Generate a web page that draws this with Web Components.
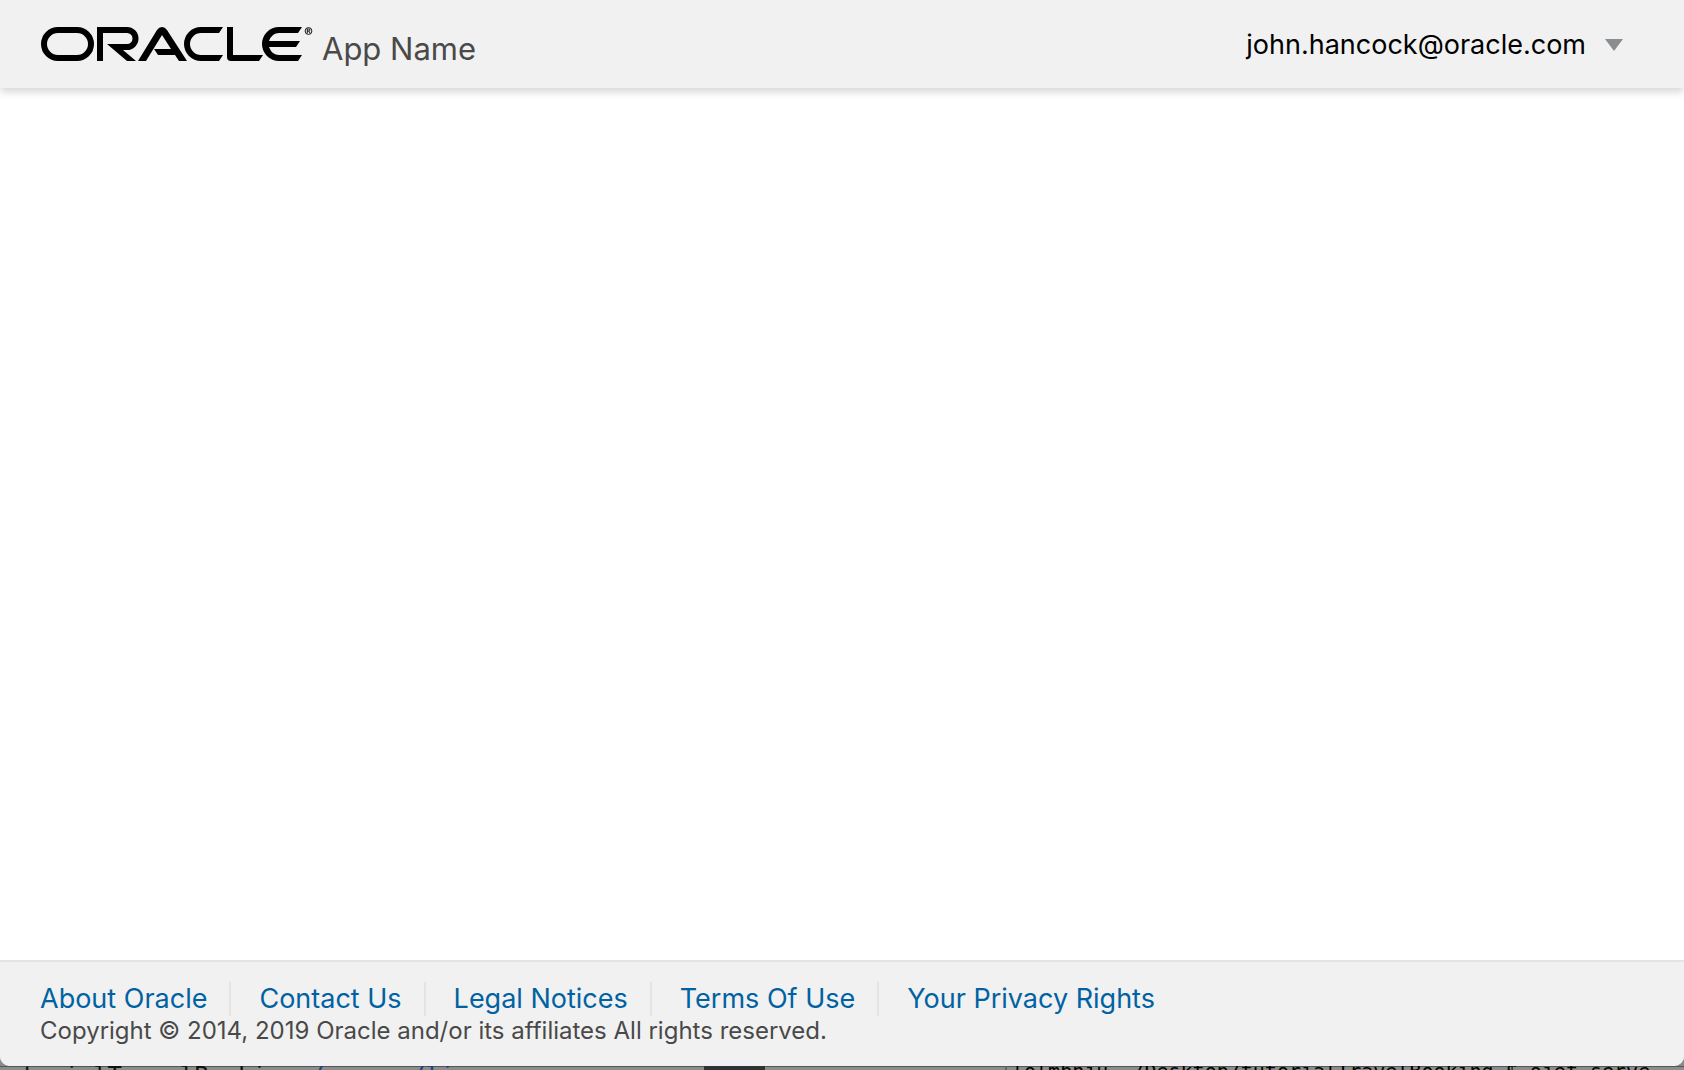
<!DOCTYPE html>
<html lang="en">
<head>
<meta charset="utf-8">
<title>App Name</title>
<style>
html,body{margin:0;height:100%;overflow:hidden}
body{font-family:Inter,Roboto,"Liberation Sans",sans-serif;background:#8c8c8c}
</style>
</head>
<body>
<app-shell></app-shell>
<script>
const define=(name,html)=>customElements.define(name,class extends HTMLElement{
  constructor(){super();this.attachShadow({mode:"open"}).innerHTML=html;}
});

define("oracle-logo",`<style>:host{display:block}svg{display:block;width:273px;height:36px}</style>
<svg viewBox="0 0 273 36" role="img" aria-label="Oracle">
<g fill="none" stroke="#000" stroke-width="6">
<path d="M18 4H37A14 14 0 0 1 37 32H18A14 14 0 0 1 18 4Z"/>
<path d="M60 35V4H87A8.500 8.500 0 0 1 87 21H82"/>
</g>
<path d="M67 18H88V24H83L96 35H87Z"/>
<path d="M98 35L117 4Q119 1 122 1T127 4L147 35H139L135 29H118L114 23H131L122 9L106 35Z"/>
<path d="M183 1L179 7H161A11 11 0 0 0 161 29H183L179 35H161A17 17 0 0 1 161 1Z"/>
<path d="M187 1H193V29H223L219 35H191Q187 35 187 31Z"/>
<path d="M262 1L258 7H239Q232 7 229 15H260L256 21H229Q232 29 239 29H262L258 35H239A17 17 0 0 1 239 1Z"/>
<g fill="none" stroke="#000"><circle cx="268.500" cy="5" r="3.400" stroke-width=".9"/><path stroke-width=".9" d="M267.300 7.300V3H268.700Q270 3 270 4T268.700 5H267.300M268.700 5L270.200 7.300"/></g>
</svg>`);

define("user-menu",`<style>:host{display:block}
button{display:flex;align-items:center;gap:19px;padding:0;border:0;background:none;color:#000;font:inherit;font-size:27px;line-height:36px}
svg{display:block}</style>
<button type="button" aria-haspopup="menu"><slot></slot><svg width="18" height="12" aria-hidden="true"><path d="M0 0H18L9 12Z" fill="#8a8d8f"/></svg></button>`);

define("app-header",`<style>:host{display:flex;align-items:center;justify-content:space-between;height:88px;padding:2px 61px 0 40px;box-sizing:border-box;background:#f1f1f1;box-shadow:0 4px 8px 0 rgba(0,0,0,.16);position:relative}
.brand{display:flex;align-items:flex-start;gap:9px;padding-top:2px}
h1{margin:5px 0 0;font-size:31px;line-height:36px;font-weight:400;color:#494949}
</style><div class="brand"><oracle-logo></oracle-logo><h1>App Name</h1></div><user-menu>john.hancock@oracle.com</user-menu>`);

define("footer-link",`<style>:host{display:block;border-left:2px solid #e4e4e4;padding:0 22px 0 28px}
:host(:first-child){border:0;padding-left:0}
a{display:block;color:#0062a3;text-decoration:none;font-size:27px;line-height:34px;white-space:nowrap}</style><a href="#"><slot></slot></a>`);

define("app-footer",`<style>:host{display:block;background:#f1f1f1;border-top:2px solid #e4e4e4;padding:20px 40px;color:#494949}
nav{display:flex}p{margin:0;font-size:24px;line-height:30px}</style>
<nav aria-label="Footer"><footer-link>About Oracle</footer-link><footer-link>Contact Us</footer-link><footer-link>Legal Notices</footer-link><footer-link>Terms Of Use</footer-link><footer-link>Your Privacy Rights</footer-link></nav>
<p>Copyright © 2014, 2019 Oracle and/or its affiliates All rights reserved.</p>`);

define("desktop-strip",`<style>:host{display:flex;height:4px;overflow:hidden;background:linear-gradient(#555 1px,#8c8c8c 1px);font-family:"DejaVu Sans Mono","Liberation Mono",monospace;color:#111;white-space:pre}
.a{flex:0 0 704px;font-size:24px;line-height:20px;text-indent:-8px}.a b{font-weight:400;color:#1f3e80}
.b{flex:0 0 61px;background:#303133}
.c{flex:0 0 240px;border-right:2px solid #666}
.d{flex:1;font-size:20px;line-height:10px;padding-left:5px;color:#000}</style>
<div class="a">tutorialTravelBooking<b>&lt;/pre&gt; &lt;/li&gt;</b></div><div class="b"></div><div class="c"></div><div class="d">lolmbnju ~/Desktop/tutorialTravelBooking $ ojet serve</div>`);

define("app-shell",`<style>:host{display:flex;flex-direction:column;height:100vh}
.window{flex:1;display:flex;flex-direction:column;background:#fff;border-radius:0 0 10px 10px;overflow:hidden}
main{flex:1}</style>
<div class="window"><app-header></app-header><main></main><app-footer></app-footer></div><desktop-strip></desktop-strip>`);
</script>
</body>
</html>
